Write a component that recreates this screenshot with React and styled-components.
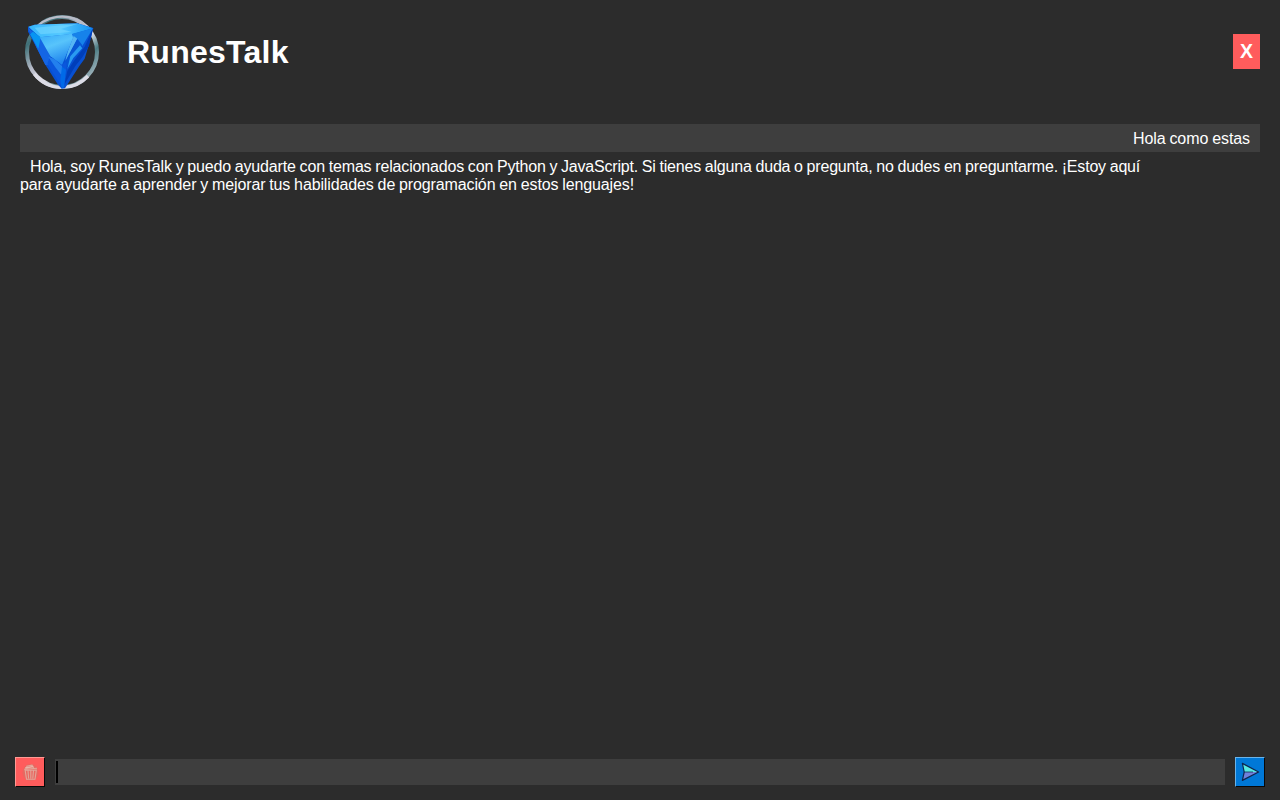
import React from "react";
import styled, { createGlobalStyle } from "styled-components";

const GlobalStyle = createGlobalStyle`
  * { box-sizing: border-box; }
  body { margin: 0; background: #2c2c2c; overflow: hidden; }
  button, input { font-family: inherit; }
`;

const Window = styled.div`
  display: flex;
  flex-direction: column;
  width: 1280px;
  height: 800px;
  background: #2c2c2c;
  color: #fff;
  font-family: "Liberation Sans", Arial, sans-serif;
`;

const Header = styled.header`
  display: flex;
  align-items: center;
  height: 104px;
  padding: 0 20px 0 14px;
`;

const Title = styled.h1`
  margin: 0 auto 0 17px;
  font-size: 32px;
  line-height: 36px;
  font-weight: 700;
  letter-spacing: 0.25px;
`;

const CloseButton = styled.button`
  width: 27px;
  height: 35px;
  margin-bottom: 2px;
  padding: 0;
  border: 0;
  background: #ff5c5c;
  color: #fff;
  font-size: 19.5px;
  font-weight: 700;
  line-height: 35px;
`;

const Conversation = styled.main`
  flex: 1;
  padding: 20px 20px 0;
  font-size: 16px;
  line-height: 18px;
`;

const UserMessage = styled.p`
  margin: 0;
  padding: 6px 10px 4px;
  background: #3e3e3e;
  text-align: right;
  letter-spacing: -0.08px;
  word-spacing: -0.45px;
`;

const BotMessage = styled.p`
  margin: 0;
  padding-top: 6px;
`;

const Line = styled.span`
  display: block;
  white-space: nowrap;
  padding-left: ${(p) => (p.$indent ? "10px" : "0")};
  letter-spacing: ${(p) => p.$tracking};
  word-spacing: -0.45px;
`;

const Phrase = styled.span`
  letter-spacing: ${(p) => p.$tracking};
`;

const Composer = styled.form`
  display: flex;
  align-items: center;
  height: 56px;
  padding: 0 15px;
`;

const ToolButton = styled.button`
  display: grid;
  place-items: center;
  width: 30px;
  height: 30px;
  padding: 0;
  border: 1px solid;
  border-color: ${(p) => p.$light} #080808 #080808 ${(p) => p.$light};
  background: ${(p) => p.$fill};
`;

const Field = styled.div`
  display: flex;
  align-items: center;
  flex: 1;
  height: 26px;
  margin: 0 10px;
  padding-left: 1px;
  background: #3e3e3e;
`;

const Caret = styled.span`
  width: 2px;
  height: 22px;
  background: #000;
`;

function Logo() {
  return (
    <svg width="96" height="92" viewBox="0 0 288 276">
      <defs>
        <linearGradient id="ring" x1="0" y1="0" x2="1" y2="1">
          <stop offset="0" stopColor="#8aa0a8" />
          <stop offset=".2" stopColor="#3f7077" />
          <stop offset=".4" stopColor="#b6bac8" />
          <stop offset=".58" stopColor="#e0e0e8" />
          <stop offset=".72" stopColor="#4d7d84" />
          <stop offset="1" stopColor="#d8dae4" />
        </linearGradient>
        <linearGradient id="top" x1="0" y1="0" x2="1" y2="0">
          <stop offset="0" stopColor="#35b5fb" />
          <stop offset=".5" stopColor="#55c9ff" />
          <stop offset="1" stopColor="#1592f2" />
        </linearGradient>
        <linearGradient id="face" x1="0" y1="0" x2=".4" y2="1">
          <stop offset="0" stopColor="#35aaf9" />
          <stop offset=".45" stopColor="#58c4fb" />
          <stop offset="1" stopColor="#2187ee" />
        </linearGradient>
      </defs>
      <circle cx="144" cy="138" r="105" fill="none" stroke="url(#ring)" strokeWidth="12" />
      <path d="M57 77A106 106 0 0 1 211 56" fill="none" stroke="#b9bcc8" strokeWidth="7" />
      <path d="M61 204A106 106 0 0 0 222 210" fill="none" stroke="#dcdce6" strokeWidth="10" />
      <path d="M42 63L62 56L190 52L238 66L232 91L212 158L196 180L153 247L143 248L131 235L94 176L67 124L42 77Z" fill="#0750d2" />
      <path d="M43 62L62 56L190 52L237 67L177 84L78 94Z" fill="url(#top)" />
      <path d="M62 65L190 54L140 69L174 78L80 85Z" fill="#72d5ff" opacity=".65" />
      <path d="M42 66L78 94L108 151L119 176L94 177L67 124Z" fill="#1465e4" />
      <path d="M57 77L80 94L73 128L48 85Z" fill="#0795f2" />
      <path d="M77 94L174 83L179 94L144 177L109 151Z" fill="url(#face)" />
      <path d="M108 151L144 178L162 157L147 247L121 208L100 173Z" fill="#0a56dc" />
      <path d="M103 152L121 159L144 180L145 211L124 184Z" fill="#2380ed" />
      <path d="M175 83L237 67L205 120L186 98L151 165L177 96Z" fill="#1682ea" />
      <path d="M179 90L190 98L154 165L162 135Z" fill="#54b5f4" />
      <path d="M190 98L205 118L179 139L162 183L155 168Z" fill="#0757d5" />
      <path d="M198 118L205 127L178 156L160 189L169 151Z" fill="#299af1" />
      <path d="M237 67L225 120L205 154L184 180L151 236L160 195L181 163L212 122Z" fill="#003eb9" />
      <path d="M144 182L156 191L150 244L143 247L139 222Z" fill="#006ae8" />
    </svg>
  );
}

function TrashIcon() {
  return (
    <svg width="18" height="18" viewBox="0 0 18 18" fill="none" stroke="#e2a699" strokeWidth="1.1">
      <ellipse cx="9.5" cy="9.5" rx="8" ry="8.5" fill="#d96e63" stroke="none" opacity=".6" />
      <path d="M3.2 6.2L16 5.2M6 5.3L5.8 3.2L11 2.2L12.6 5M4.2 7.3L5.5 16.3H14L15.3 7ZM7 7.5L7.6 15.5M9.8 7.5V15.5M12.5 7.5L11.8 15.5" />
      <path d="M4.2 5L12.3 3.4" stroke="#e8b5a8" strokeWidth="1.5" />
    </svg>
  );
}

function SendIcon() {
  return (
    <svg width="22" height="22" viewBox="0 0 22 22">
      <path d="M3.4 2.4L19.6 11L5.2 11Z" fill="#55e9e1" />
      <path d="M5.2 11L19.6 11L3.4 19.4Z" fill="#7080dc" />
      <path d="M3.4 2.4L19.6 11L3.4 19.4L5.2 11Z" fill="none" stroke="#10264e" strokeWidth="1.2" strokeLinejoin="round" />
      <path d="M5.2 11H14" stroke="#10264e" strokeWidth=".8" />
    </svg>
  );
}

export default function App() {
  return (
    <Window>
      <GlobalStyle />
      <Header>
        <Logo />
        <Title>RunesTalk</Title>
        <CloseButton>X</CloseButton>
      </Header>
      <Conversation>
        <UserMessage>Hola como estas</UserMessage>
        <BotMessage>
          <Line $indent $tracking="-0.195px">
            <Phrase $tracking="-0.165px">Hola, soy RunesTalk y puedo ayudarte con temas relacionados con </Phrase>
            Python y JavaScript. Si tienes alguna duda o pregunta, no dudes en preguntarme. ¡Estoy aquí
          </Line>
          <Line $tracking="-0.12px">
            para ayudarte a aprender y mejorar tus habilidades de programación en estos lenguajes!
          </Line>
        </BotMessage>
      </Conversation>
      <Composer>
        <ToolButton type="button" aria-label="Borrar" $fill="#ff5c5c" $light="#ff9a94">
          <TrashIcon />
        </ToolButton>
        <Field role="textbox">
          <Caret />
        </Field>
        <ToolButton type="button" aria-label="Enviar" $fill="#0078d7" $light="#6ab4ea">
          <SendIcon />
        </ToolButton>
      </Composer>
    </Window>
  );
}
